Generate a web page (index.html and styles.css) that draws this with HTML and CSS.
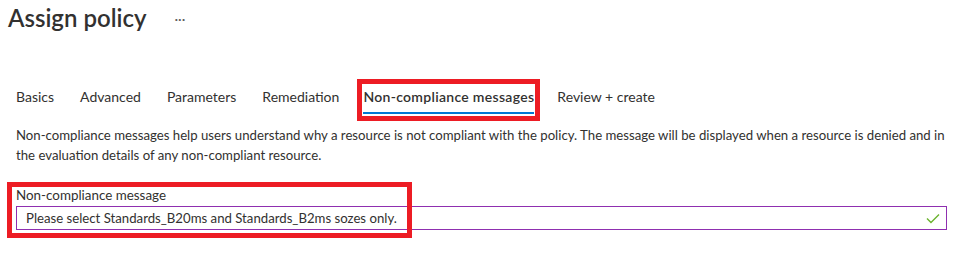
FILE: index.html
```html
<!DOCTYPE html>
<html lang="en">
<head>
<meta charset="utf-8">
<title>Assign policy</title>
<link rel="stylesheet" href="styles.css">
</head>
<body>
<div class="page">
  <header class="title-row">
    <h1 class="title">Assign policy</h1>
    <span class="more">···</span>
  </header>
  <nav class="tabs">
    <span class="tab"><span class="tab-label">Basics</span></span>
    <span class="tab"><span class="tab-label">Advanced</span></span>
    <span class="tab"><span class="tab-label">Parameters</span></span>
    <span class="tab"><span class="tab-label">Remediation</span></span>
    <span class="tab active"><span class="tab-label">Non-compliance messages</span></span>
    <span class="tab"><span class="tab-label">Review + create</span></span>
  </nav>
  <p class="desc">Non-compliance messages help users understand why a resource is not compliant with the policy. The message will be displayed when a resource is denied and in the evaluation details of any non-compliant resource.</p>
  <div class="field">
    <label class="label">Non-compliance message</label>
    <div class="input">
      <span class="value">Please select Standards_B20ms and Standards_B2ms sozes only.</span>
      <svg class="check" width="14" height="11" viewBox="0 0 14 11"><path d="M1 5.5 L5 9.5 L13 1.5" fill="none" stroke="#6bb32e" stroke-width="1.4"/></svg>
    </div>
    <div class="annot"></div>
  </div>
</div>
</body>
</html>
```
FILE: styles.css
```css
html, body {
  margin: 0;
  padding: 0;
  background: #ffffff;
}
body {
  font-family: Lato, "Open Sans", sans-serif;
  color: #323130;
  font-size: 14px;
}
.page {
  width: 964px;
  height: 265px;
  overflow: hidden;
}
.title-row {
  display: flex;
  align-items: center;
  padding: 2px 0 0 8px;
  height: 32px;
}
.title {
  margin: 0;
  font-size: 24px;
  font-weight: 600;
  line-height: 32px;
  color: #323130;
}
.more {
  margin-left: 28px;
  font-size: 14px;
  color: #605e5c;
}
.tabs {
  display: flex;
  gap: 24px;
  margin-top: 50px;
  padding-left: 15px;
}
.tab {
  padding: 3px 1px 2px;
  line-height: 20px;
  white-space: nowrap;
}
.tab-label {
  display: block;
  padding-bottom: 5px;
  border-bottom: 2px solid transparent;
}
.tab.active {
  font-weight: 600;
  letter-spacing: 0.3px;
  outline: 5px solid #ed1c24;
  margin-left: -2px;
  margin-right: -3px;
}
.tab.active .tab-label {
  border-bottom-color: #0078d4;
}
.desc {
  margin: 9px 0 0 16px;
  width: 935px;
  font-size: 13.2px;
  line-height: 20px;
}
.field {
  position: relative;
  margin: 20px 0 0 16px;
  width: 931px;
}
.label {
  display: block;
  font-size: 13.4px;
  line-height: 20px;
}
.input {
  margin-top: 1px;
  height: 22px;
  border: 1px solid #8f2fb0;
  display: flex;
  align-items: center;
  justify-content: space-between;
  padding: 0 6px 0 9px;
}
.value {
  font-size: 13.2px;
  line-height: 20px;
}
.annot {
  position: absolute;
  left: -9px;
  top: -3px;
  width: 395px;
  height: 46px;
  border: 5px solid #ed1c24;
}
```
